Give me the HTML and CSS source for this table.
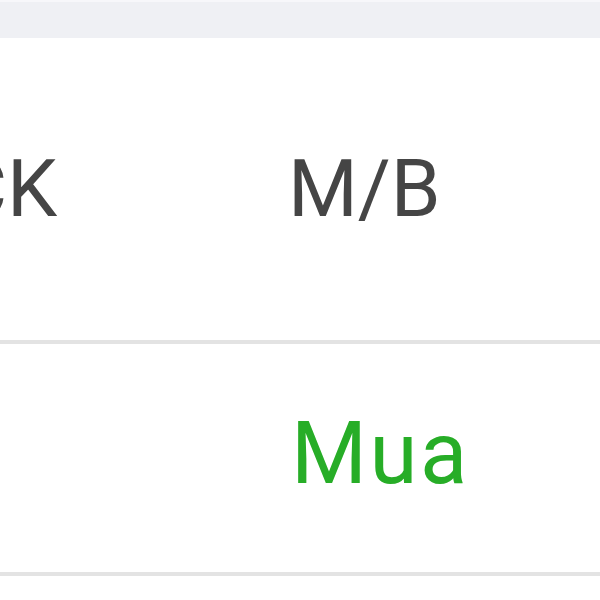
FILE: index.html
```html
<!DOCTYPE html>
<html lang="en">
<head>
  <meta charset="UTF-8">
  <title>Order table</title>
  <link rel="stylesheet" href="styles.css">
</head>
<body>
  <div class="topbar"></div>

  <div class="table">
    <div class="row head">
      <div class="cell">CK</div>
      <div class="cell">M/B</div>
    </div>

    <div class="row">
      <div class="cell"></div>
      <div class="cell buy">Mua</div>
    </div>
  </div>
</body>
</html>
```

FILE: styles.css
```css
body {
  margin: 0;
  background: #ffffff;
  font-family: Roboto, 'Noto Sans', sans-serif;
  overflow: hidden;
}

.topbar {
  height: 36px;
  background: #eff0f4;
  border-top: 2px solid #f7f7fa;
}

.table {
  margin-left: -45px;
  width: 645px;
}

.row {
  display: grid;
  grid-template-columns: 333px 1fr;
  align-items: center;
  border-bottom: 4px solid #e3e3e3;
}

.row.head {
  height: 302px;
  font-size: 80px;
  color: #454545;
}

.row:not(.head) {
  height: 228px;
  font-size: 87px;
}

.cell {
  line-height: 1;
  white-space: nowrap;
}

.buy {
  color: #27ad27;
  padding-left: 3px;
  letter-spacing: 2.5px;
  margin-bottom: 10px;
}
```
